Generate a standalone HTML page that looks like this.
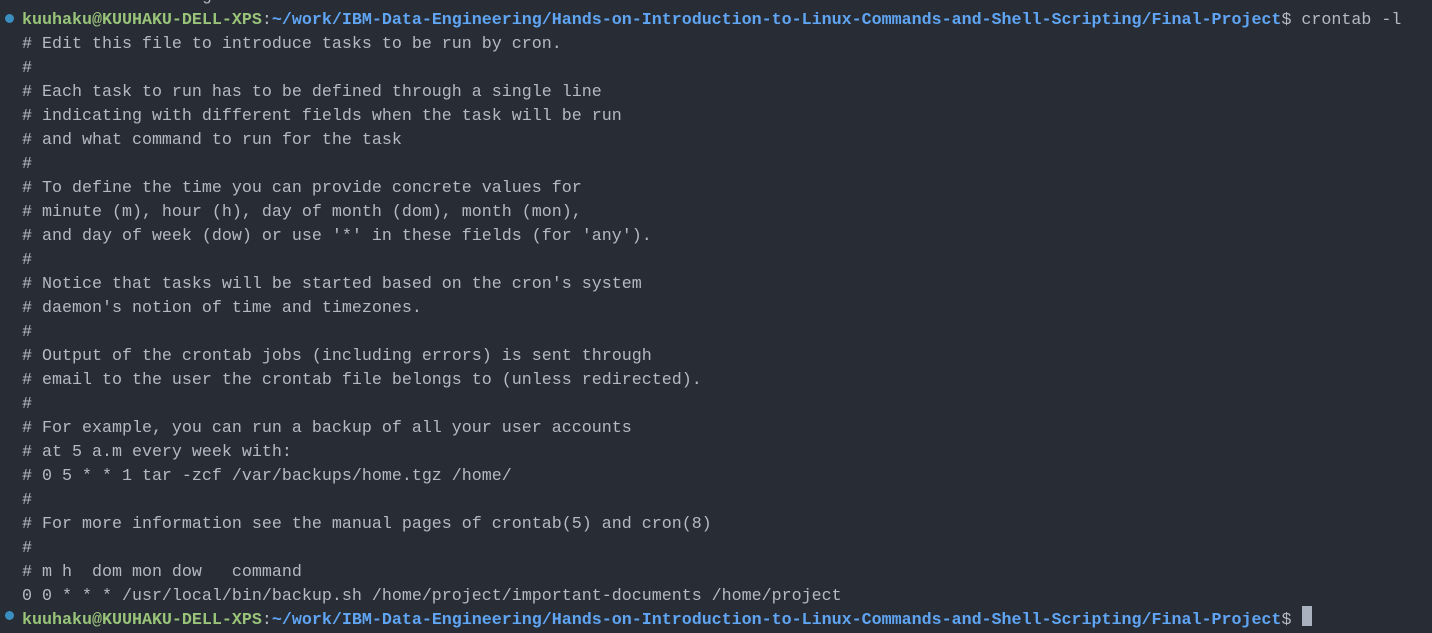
<!DOCTYPE html>
<html><head><meta charset="utf-8"><style>
html,body{margin:0;padding:0;background:#282c34;width:1432px;height:616px;overflow:hidden}
.t{position:absolute;left:22px;top:-15px;font-family:"Liberation Mono","DejaVu Sans Mono",monospace;font-size:16.67px;line-height:24px;color:#b4bac4;white-space:pre}
.g{color:#98c379;font-weight:bold}.b{color:#5fa5f4;font-weight:bold}
.dot{position:absolute;left:5px;width:9px;height:9px;border-radius:50%;background:#3a8fc0}
.cur{position:absolute;left:1302px;top:606px;width:10px;height:20px;background:#abb2bf}
</style></head><body>
<div class="dot" style="top:14px"></div>
<div class="dot" style="top:611px"></div>
<div class="t">crontab: installing new crontab
<span class="g">kuuhaku@KUUHAKU-DELL-XPS</span>:<span class="b">~/work/IBM-Data-Engineering/Hands-on-Introduction-to-Linux-Commands-and-Shell-Scripting/Final-Project</span>$ crontab -l
# Edit this file to introduce tasks to be run by cron.
# 
# Each task to run has to be defined through a single line
# indicating with different fields when the task will be run
# and what command to run for the task
# 
# To define the time you can provide concrete values for
# minute (m), hour (h), day of month (dom), month (mon),
# and day of week (dow) or use '*' in these fields (for 'any').
# 
# Notice that tasks will be started based on the cron's system
# daemon's notion of time and timezones.
# 
# Output of the crontab jobs (including errors) is sent through
# email to the user the crontab file belongs to (unless redirected).
# 
# For example, you can run a backup of all your user accounts
# at 5 a.m every week with:
# 0 5 * * 1 tar -zcf /var/backups/home.tgz /home/
# 
# For more information see the manual pages of crontab(5) and cron(8)
# 
# m h  dom mon dow   command
0 0 * * * /usr/local/bin/backup.sh /home/project/important-documents /home/project
<span class="g">kuuhaku@KUUHAKU-DELL-XPS</span>:<span class="b">~/work/IBM-Data-Engineering/Hands-on-Introduction-to-Linux-Commands-and-Shell-Scripting/Final-Project</span>$ </div>
<div class="cur"></div>
</body></html>
